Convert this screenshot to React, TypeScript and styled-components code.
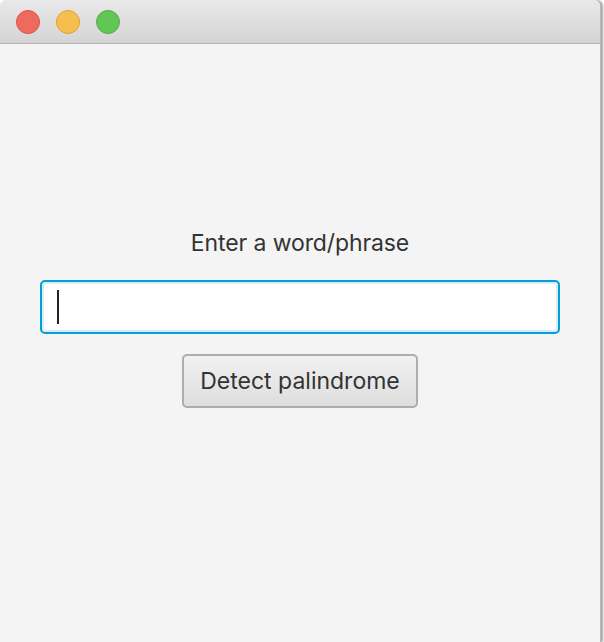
import React from "react";
import styled, { createGlobalStyle } from "styled-components";

const Global = createGlobalStyle`
  html, body { margin: 0; padding: 0; background: #ffffff; }
  body { font-family: "Inter", "Open Sans", sans-serif; }
`;

const Window = styled.div`
  width: 600px;
  height: 642px;
  background: #f4f4f4;
  border-radius: 6px 6px 0 0;
  box-shadow: 1px 0 0 #b8b8b8, 3px 0 2px rgba(0, 0, 0, 0.35);
  display: flex;
  flex-direction: column;
  overflow: hidden;
`;

const TitleBar = styled.div`
  height: 43px;
  flex: none;
  background: linear-gradient(#e9e9e9, #d4d4d4);
  border-bottom: 1px solid #b2b2b2;
  display: flex;
  align-items: center;
  gap: 16px;
  padding-left: 16px;
  box-sizing: content-box;
`;

const Light = styled.div<{ $fill: string; $edge: string }>`
  width: 22px;
  height: 22px;
  border-radius: 50%;
  background: ${(p) => p.$fill};
  border: 1px solid ${(p) => p.$edge};
`;

const Content = styled.div`
  flex: 1;
  display: flex;
  flex-direction: column;
  align-items: center;
  padding: 184px 40px 0 40px;
`;

const Label = styled.div`
  font-size: 23px;
  line-height: 30px;
  color: #333333;
  letter-spacing: -0.1px;
`;

const Field = styled.div`
  margin-top: 22px;
  align-self: stretch;
  height: 54px;
  box-sizing: border-box;
  border: 2px solid #039ed3;
  border-radius: 5px;
  box-shadow: inset 0 0 0 2px #d6edf8;
  background: #ffffff;
  display: flex;
  align-items: center;
  padding-left: 15px;
`;

const Caret = styled.div`
  width: 2px;
  height: 34px;
  background: #222222;
`;

const Button = styled.button`
  margin-top: 20px;
  width: 236px;
  height: 54px;
  box-sizing: border-box;
  border: 2px solid #adadad;
  border-radius: 5px;
  background: linear-gradient(#f1f1f1, #dedede);
  font-family: "Inter", "Open Sans", sans-serif;
  font-size: 23px;
  color: #333333;
  letter-spacing: 0;
  padding: 0;
`;

export default function App() {
  return (
    <>
      <Global />
      <Window>
        <TitleBar>
          <Light $fill="#ef6a5e" $edge="#dd5247" />
          <Light $fill="#f6be4f" $edge="#dea236" />
          <Light $fill="#62c655" $edge="#4fae43" />
        </TitleBar>
        <Content>
          <Label>Enter a word/phrase</Label>
          <Field>
            <Caret />
          </Field>
          <Button>Detect palindrome</Button>
        </Content>
      </Window>
    </>
  );
}
